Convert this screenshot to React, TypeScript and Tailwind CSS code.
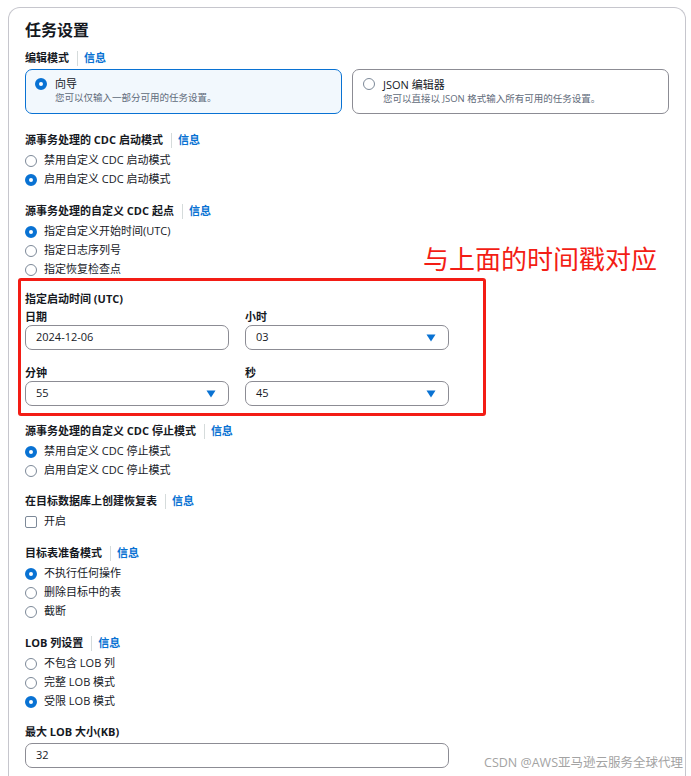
import React from 'react';

const font = "font-['Open_Sans','Noto_Sans_CJK_SC',sans-serif]";

function Radio({ checked = false }: { checked?: boolean }) {
  if (checked) {
    return <span className="block w-[12px] h-[12px] shrink-0 rounded-full border-[4px] border-[#0972d3] bg-white" />;
  }
  return <span className="block w-[12px] h-[12px] shrink-0 rounded-full border-[1.5px] border-[#7d8998] bg-white" />;
}

function Heading({ label, info = true }: { label: string; info?: boolean }) {
  return (
    <div className="flex items-center h-[19px] mb-[1px] text-[11px] font-bold text-[#16191f]">
      <span>{label}</span>
      {info && (
        <>
          <span className="block w-px h-[15px] bg-[#d5dbdb] ml-[8px] mr-[6px]" />
          <span className="text-[#0972d3]">信息</span>
        </>
      )}
    </div>
  );
}

function Option({ label, checked = false }: { label: string; checked?: boolean }) {
  return (
    <div className="flex items-center gap-[7px] h-[19px] text-[11px] text-[#16191f]">
      <Radio checked={checked} />
      <span>{label}</span>
    </div>
  );
}

function Triangle() {
  return (
    <svg width="10" height="8" viewBox="0 0 10 8" className="shrink-0">
      <polygon points="0.5,0.5 9.5,0.5 5,7.5" fill="#0972d3" />
    </svg>
  );
}

function Field({ value, dropdown = false }: { value: string; dropdown?: boolean }) {
  return (
    <div className="flex items-center justify-between h-[25px] border border-[#8c8c94] rounded-[7px] bg-white pl-[10px] pr-[12px] text-[11px] text-[#16191f]">
      <span>{value}</span>
      {dropdown && <Triangle />}
    </div>
  );
}

function FieldLabel({ label }: { label: string }) {
  return <div className="flex items-center h-[16px] text-[11px] font-bold text-[#16191f]">{label}</div>;
}

export default function App() {
  return (
    <div className={`relative w-[691px] h-[776px] overflow-hidden bg-white ${font}`}>
      <div className="pt-[7px] pl-[8px] pr-[5px]">
        <div className="border border-b-0 border-[#c6c6cd] rounded-t-[12px] px-[16px] pt-[11px] pb-[60px]">
          <h2 className="h-[22px] leading-[22px] text-[16px] font-bold text-[#16191f]">任务设置</h2>

          <div className="mt-[8px]">
            <Heading label="编辑模式" />
          </div>
          <div className="grid grid-cols-2 gap-[10px]">
            <div className="h-[45px] rounded-[7px] border-[1.5px] border-[#0972d3] bg-[#f2f8fd] pl-[9px] pt-[6px] flex gap-[8px]">
              <div className="h-[15px] flex items-center">
                <Radio checked />
              </div>
              <div>
                <div className="h-[15px] leading-[15px] text-[11px] text-[#16191f]">向导</div>
                <div className="h-[14px] leading-[14px] text-[9.5px] text-[#5f6b7a]">您可以仅输入一部分可用的任务设置。</div>
              </div>
            </div>
            <div className="h-[45px] rounded-[7px] border border-[#8c8c94] bg-white pl-[10px] pt-[6.5px] flex gap-[8px]">
              <div className="h-[15px] flex items-center">
                <Radio />
              </div>
              <div>
                <div className="h-[15px] leading-[15px] text-[11px] text-[#16191f]">JSON 编辑器</div>
                <div className="h-[14px] leading-[14px] text-[9.5px] text-[#5f6b7a]">您可以直接以 JSON 格式输入所有可用的任务设置。</div>
              </div>
            </div>
          </div>

          <div className="mt-[17px]">
            <Heading label="源事务处理的 CDC 启动模式" />
            <Option label="禁用自定义 CDC 启动模式" />
            <Option label="启用自定义 CDC 启动模式" checked />
          </div>

          <div className="relative mt-[13px]">
            <Heading label="源事务处理的自定义 CDC 起点" />
            <Option label="指定自定义开始时间(UTC)" checked />
            <Option label="指定日志序列号" />
            <Option label="指定恢复检查点" />
            <div className="absolute right-[12px] top-[42px] text-[26px] leading-[30px] text-[#f31d15]">与上面的时间戳对应</div>
          </div>

          <div className="mt-[-1px] ml-[-7px] w-[468px] border-[3px] border-[#f31d15] rounded-[3px] pl-[4px] pt-[9px] pb-[7px]">
            <div className="flex items-center h-[19px] text-[11px] font-bold text-[#16191f]">指定启动时间 (UTC)</div>
            <div className="grid grid-cols-2 gap-x-[16px] w-[424px]">
              <div>
                <FieldLabel label="日期" />
                <Field value="2024-12-06" />
              </div>
              <div>
                <FieldLabel label="小时" />
                <Field value="03" dropdown />
              </div>
              <div className="mt-[15px]">
                <FieldLabel label="分钟" />
                <Field value="55" dropdown />
              </div>
              <div className="mt-[15px]">
                <FieldLabel label="秒" />
                <Field value="45" dropdown />
              </div>
            </div>
          </div>

          <div className="mt-[6px]">
            <Heading label="源事务处理的自定义 CDC 停止模式" />
            <Option label="禁用自定义 CDC 停止模式" checked />
            <Option label="启用自定义 CDC 停止模式" />
          </div>

          <div className="mt-[12px]">
            <Heading label="在目标数据库上创建恢复表" />
            <div className="flex items-center gap-[7px] h-[19px] text-[11px] text-[#16191f]">
              <span className="block w-[12px] h-[12px] shrink-0 rounded-[2px] border-[1.5px] border-[#7d8998] bg-white" />
              <span>开启</span>
            </div>
          </div>

          <div className="mt-[13px]">
            <Heading label="目标表准备模式" />
            <Option label="不执行任何操作" checked />
            <Option label="删除目标中的表" />
            <Option label="截断" />
          </div>

          <div className="mt-[13px]">
            <Heading label="LOB 列设置" />
            <Option label="不包含 LOB 列" />
            <Option label="完整 LOB 模式" />
            <Option label="受限 LOB 模式" checked />
          </div>

          <div className="mt-[12px] w-[424px]">
            <Heading label="最大 LOB 大小(KB)" info={false} />
            <Field value="32" />
          </div>
        </div>
      </div>

      <div className="absolute right-[8px] top-[754px] text-[12.5px] leading-[18px] text-[#a3a3a3] whitespace-nowrap">
        CSDN @AWS亚马逊云服务全球代理
      </div>
    </div>
  );
}
